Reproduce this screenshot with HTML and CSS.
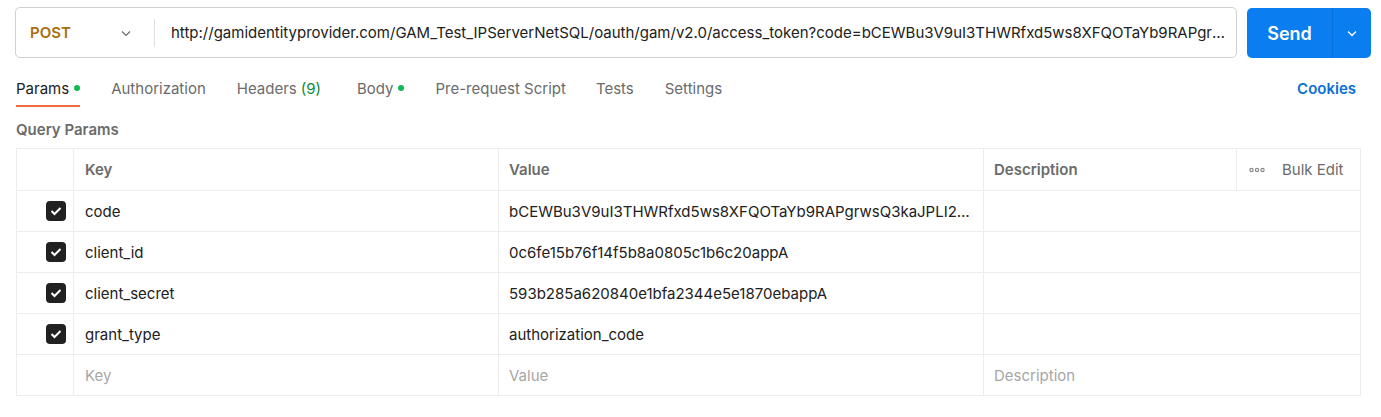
FILE: index.html
```html
<!DOCTYPE html>
<html>
<head>
<meta charset="utf-8">
<link rel="stylesheet" href="styles.css">
</head>
<body>
<div class="page">
  <div class="topbar">
    <div class="urlbox">
      <div class="method">
        <span class="method-name">POST</span>
        <svg class="chev" width="12" height="12" viewBox="0 0 12 12"><path d="M2 4.5 L6 8.5 L10 4.5" fill="none" stroke="#6b6b6b" stroke-width="1.2"/></svg>
      </div>
      <div class="url">http://gamidentityprovider.com/GAM_Test_IPServerNetSQL/oauth/gam/v2.0/access_token?code=bCEWBu3V9uI3THWRfxd5ws8XFQOTaYb9RAPgrwsQ3kaJPLI21xyzabcdefg</div>
    </div>
    <div class="send">
      <span class="send-label">Send</span>
      <span class="send-drop"><svg width="12" height="12" viewBox="0 0 12 12"><path d="M2 4.5 L6 8.5 L10 4.5" fill="none" stroke="#fff" stroke-width="1.3"/></svg></span>
    </div>
  </div>

  <div class="tabs">
    <div class="tab active">Params<span class="dot"></span></div>
    <div class="tab">Authorization</div>
    <div class="tab wide">Headers <span class="count">(9)</span></div>
    <div class="tab">Body<span class="dot"></span></div>
    <div class="tab narrow">Pre-request Script</div>
    <div class="tab">Tests</div>
    <div class="tab">Settings</div>
    <div class="spacer"></div>
    <div class="cookies">Cookies</div>
  </div>

  <div class="section-title">Query Params</div>

  <div class="table">
    <div class="row head">
      <div class="cell chk"></div>
      <div class="cell key">Key</div>
      <div class="cell val">Value</div>
      <div class="cell desc">Description</div>
      <div class="cell bulk"><svg class="dots" width="16" height="6" viewBox="0 0 16 6"><circle cx="2.5" cy="3" r="1.6" fill="none" stroke="#8a8a8a" stroke-width="1.2"/><circle cx="8" cy="3" r="1.6" fill="none" stroke="#8a8a8a" stroke-width="1.2"/><circle cx="13.5" cy="3" r="1.6" fill="none" stroke="#8a8a8a" stroke-width="1.2"/></svg><span>Bulk Edit</span></div>
    </div>
    <div class="row">
      <div class="cell chk"><span class="box"><svg width="12" height="10" viewBox="0 0 12 10"><path d="M1.5 5 L4.5 8 L10.5 2" fill="none" stroke="#fff" stroke-width="2"/></svg></span></div>
      <div class="cell key">code</div>
      <div class="cell val"><span class="ell">bCEWBu3V9uI3THWRfxd5ws8XFQOTaYb9RAPgrwsQ3kaJPLI21xyzabcdef</span></div>
      <div class="cell descw"></div>
    </div>
    <div class="row">
      <div class="cell chk"><span class="box"><svg width="12" height="10" viewBox="0 0 12 10"><path d="M1.5 5 L4.5 8 L10.5 2" fill="none" stroke="#fff" stroke-width="2"/></svg></span></div>
      <div class="cell key">client_id</div>
      <div class="cell val">0c6fe15b76f14f5b8a0805c1b6c20appA</div>
      <div class="cell descw"></div>
    </div>
    <div class="row">
      <div class="cell chk"><span class="box"><svg width="12" height="10" viewBox="0 0 12 10"><path d="M1.5 5 L4.5 8 L10.5 2" fill="none" stroke="#fff" stroke-width="2"/></svg></span></div>
      <div class="cell key">client_secret</div>
      <div class="cell val">593b285a620840e1bfa2344e5e1870ebappA</div>
      <div class="cell descw"></div>
    </div>
    <div class="row">
      <div class="cell chk"><span class="box"><svg width="12" height="10" viewBox="0 0 12 10"><path d="M1.5 5 L4.5 8 L10.5 2" fill="none" stroke="#fff" stroke-width="2"/></svg></span></div>
      <div class="cell key">grant_type</div>
      <div class="cell val">authorization_code</div>
      <div class="cell descw"></div>
    </div>
    <div class="row last">
      <div class="cell chk"></div>
      <div class="cell key ph">Key</div>
      <div class="cell val ph">Value</div>
      <div class="cell descw ph">Description</div>
    </div>
  </div>
</div>
</body>
</html>
```

FILE: styles.css
```css
* { box-sizing: border-box; }
html, body { margin: 0; padding: 0; background: #fff; }
body {
  font-family: Inter, "Noto Sans", "Liberation Sans", sans-serif;
  font-size: 15px;
  color: #212121;
  width: 1381px;
  height: 417px;
  overflow: hidden;
}
.page { padding: 7px 10px 0 15px; }

.topbar { display: flex; gap: 10px; height: 51px; }
.urlbox {
  flex: 0 0 1222px;
  display: flex;
  align-items: center;
  border: 1px solid #d0d0d0;
  border-radius: 5px;
  overflow: hidden;
}
.method {
  width: 139px;
  height: 28px;
  display: flex;
  align-items: center;
  justify-content: space-between;
  padding: 0 22px 0 14px;
  border-right: 1px solid #e0e0e0;
}
.method-name { color: #a8700c; font-weight: 600; font-size: 15px; }
.url {
  flex: 1;
  padding: 0 10px 0 16px;
  white-space: nowrap;
  overflow: hidden;
  text-overflow: ellipsis;
  color: #212121;
}
.send {
  width: 125px;
  margin-top: 1px;
  height: 50px;
  background: #0a7ef0;
  border-radius: 5px;
  display: flex;
  align-items: center;
  color: #fff;
}
.send-label { flex: 0 0 85px; text-align: center; font-weight: 600; font-size: 18px; }
.send-drop {
  flex: 1;
  height: 100%;
  border-left: 1px solid #0a6fd6;
  display: flex;
  align-items: center;
  justify-content: center;
}

.tabs {
  display: flex;
  align-items: stretch;
  height: 49px;
  padding-left: 1px;
}
.tab {
  display: flex;
  align-items: center;
  margin-right: 31px;
  color: #6b6b6b;
  position: relative;
  padding-top: 11px;
}
.tab.wide { margin-right: 36px; }
.tab.narrow { margin-right: 30px; }
.tab.active { color: #212121; }
.tab.active::after {
  content: "";
  position: absolute;
  left: 0; right: 0; bottom: 0;
  height: 2px;
  background: #f26b3a;
}
.dot { width: 6px; height: 6px; border-radius: 50%; background: #0cbb52; margin-left: 5px; }
.count { color: #0a8a3a; margin-left: 4px; }
.spacer { flex: 1; }
.cookies { display: flex; align-items: center; color: #0a6fd6; font-weight: 600; margin-right: 15px; padding-top: 11px; }

.section-title {
  font-weight: 600;
  color: #6b6b6b;
  margin-top: 13px;
  padding-left: 1px;
  height: 28px;
}

.table {
  width: 1345px;
  margin-left: 1px;
  border: 1px solid #ececec;
}
.row { display: flex; height: 41px; border-bottom: 1px solid #ececec; }
.row.last { border-bottom: none; height: 40px; }
.row.head { height: 42px; }
.cell { display: flex; align-items: center; padding: 0 10px 0 11px; height: 100%; }
.chk { width: 57px; justify-content: flex-end; padding-right: 7px; border-right: 1px solid #ececec; }
.key { width: 425px; border-right: 1px solid #ececec; }
.val { width: 485px; border-right: 1px solid #ececec; padding-left: 10px; }
.desc { width: 253px; border-right: 1px solid #ececec; padding-left: 10px; }
.descw { flex: 1; padding-left: 10px; }
.bulk { flex: 1; color: #6b6b6b; gap: 17px; padding-left: 12px; }
.head .cell { font-weight: 600; color: #6b6b6b; }
.head .bulk { font-weight: 400; }
.ph { color: #a6a6a6; }
.ell { white-space: nowrap; overflow: hidden; text-overflow: ellipsis; }
.box {
  width: 20px; height: 20px;
  background: #212121;
  border-radius: 4px;
  display: flex; align-items: center; justify-content: center;
}
```
